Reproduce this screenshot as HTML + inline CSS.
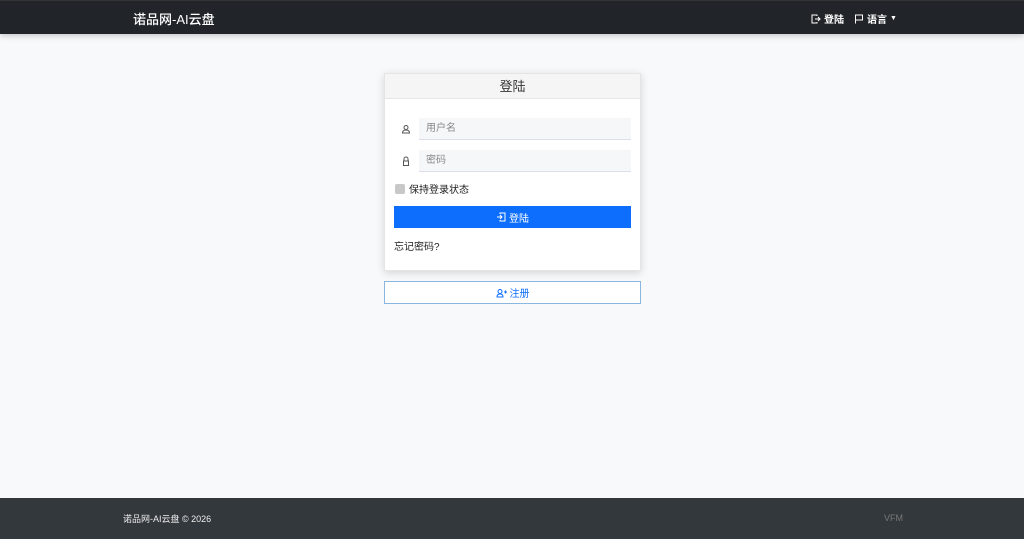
<!DOCTYPE html>
<html><head><meta charset="utf-8"><style>
*{box-sizing:border-box;margin:0;padding:0}
body{width:1024px;height:539px;background:#f8f9fb;font-family:"Liberation Sans","Noto Sans CJK SC",sans-serif;position:relative;overflow:hidden}
.nav{position:absolute;left:0;top:0;width:1024px;height:34px;background:#212529;border-top:1px solid #333;box-shadow:0 2px 6px rgba(0,0,0,.2)}
.brand{position:absolute;left:133px;top:8px;color:#fff;font-size:13px;font-weight:500}
.nr{position:absolute;top:10px;color:#fff;font-size:10px;font-weight:bold;display:flex;align-items:center;gap:3px}
.card{position:absolute;left:384px;top:73px;width:257px;height:198px;background:#fff;box-shadow:0 2px 8px rgba(0,0,0,.15);border:1px solid #e5e5e5}
.ch{height:25px;background:#f5f5f5;border-bottom:1px solid #e6e6e6;text-align:center;font-size:13px;line-height:25px;color:#333}
.in{position:absolute;left:34px;width:212px;height:22px;background:#f6f7f9;border-bottom:1px solid #dde;font-size:10px;color:#888;line-height:22px;padding-left:7px}
.ic{position:absolute;left:16px;width:10px;height:10px}
.chk{position:absolute;left:10px;top:107px;font-size:10px;color:#222;display:flex;align-items:center;gap:4px}
.box{width:10px;height:10px;background:#c8c8c8;border-radius:2px}
.btn{position:absolute;left:9px;top:132px;width:237px;height:22px;background:#0d6efd;color:#fff;font-size:10px;display:flex;align-items:center;justify-content:center;gap:3px}
.fg{position:absolute;left:9px;top:164px;font-size:10px;color:#222}
.reg{position:absolute;left:384px;top:281px;width:257px;height:23px;border:1px solid #8bb6e0;color:#0d6efd;font-size:10px;display:flex;align-items:center;justify-content:center;gap:3px;background:#fff}
.foot{position:absolute;left:0;top:498px;width:1024px;height:41px;background:#33383d}
.ft{position:absolute;left:123px;top:14px;color:#eee;font-size:9px}
.fv{position:absolute;left:884px;top:15px;color:#777;font-size:9px}
</style></head><body>
<div class="nav"><div class="brand">诺品网-AI云盘</div>
<div class="nr" style="left:811px"><svg width="10" height="10" viewBox="0 0 10 10" fill="none" stroke="#fff" stroke-width="1"><path d="M6 2V1H1v8h5V8M4 5h5M7 3l2 2-2 2"/></svg>登陆</div>
<div class="nr" style="left:854px"><svg width="10" height="10" viewBox="0 0 10 10" fill="none" stroke="#fff" stroke-width="1"><path d="M1.5 9.5V1h7v5h-7"/></svg>语言 <span style="font-size:7px">▼</span></div></div>
<div class="card"><div class="ch">登陆</div>
<svg class="ic" style="top:50px" viewBox="0 0 10 10" fill="none" stroke="#555" stroke-width="1"><circle cx="5" cy="3.5" r="2"/><path d="M1.5 9c0-2 1.5-3 3.5-3s3.5 1 3.5 3z"/></svg>
<div class="in" style="top:44px">用户名</div>
<svg class="ic" style="top:82px" viewBox="0 0 10 10" fill="none" stroke="#555" stroke-width="1"><path d="M3 5V3a2 2 0 0 1 4 0v2"/><rect x="2.5" y="5" width="5" height="4.5"/></svg>
<div class="in" style="top:76px">密码</div>
<div class="chk"><div class="box"></div>保持登录状态</div>
<div class="btn"><svg width="10" height="10" viewBox="0 0 10 10" fill="none" stroke="#fff" stroke-width="1"><path d="M4 2V1h5v8H4V8M1 5h5M4 3l2 2-2 2"/></svg>登陆</div>
<div class="fg">忘记密码?</div></div>
<div class="reg"><svg width="11" height="10" viewBox="0 0 11 10" fill="none" stroke="#0d6efd" stroke-width="1"><circle cx="4" cy="3.5" r="2"/><path d="M1 9c0-2 1.3-3 3-3s3 1 3 3zM8 4h3M9.5 2.5v3"/></svg>注册</div>
<div class="foot"><div class="ft">诺品网-AI云盘 © 2026</div><div class="fv">VFM</div></div>
</body></html>
